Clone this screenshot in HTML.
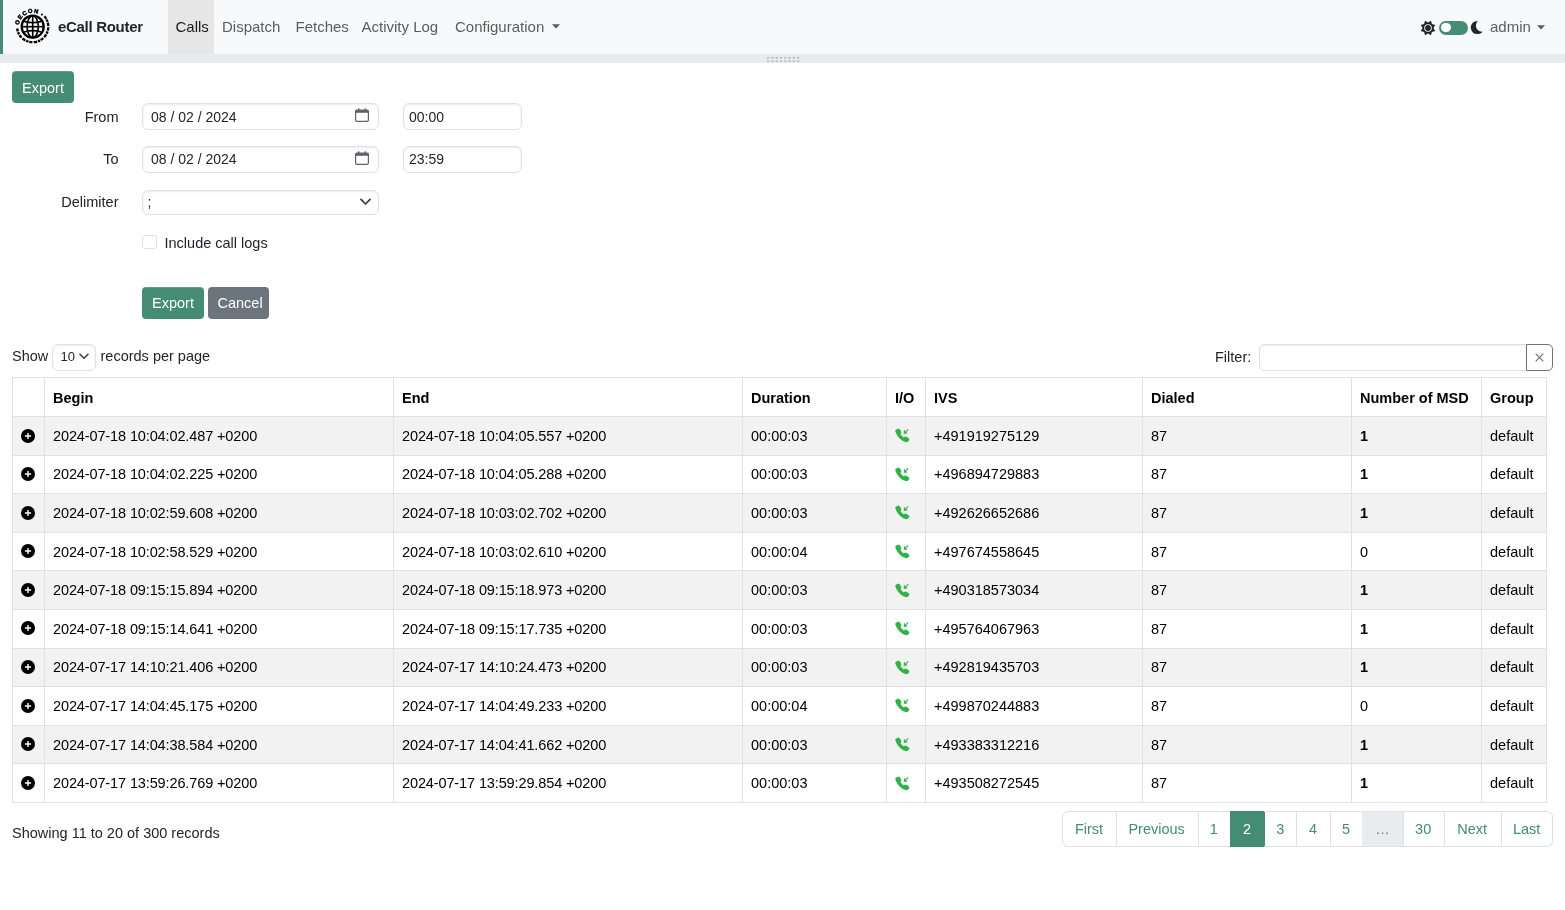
<!DOCTYPE html>
<html><head><meta charset="utf-8">
<style>
*{box-sizing:border-box}
html,body{margin:0;padding:0;width:1565px;height:910px;overflow:hidden;background:#fff;}body{will-change:transform;font-family:"Liberation Sans",sans-serif;color:#212529}
.a{position:absolute;white-space:nowrap}
.t{position:absolute;white-space:nowrap;font-size:14.5px;line-height:14.5px}
.nav{position:absolute;left:0;top:0;width:1565px;height:54px;background:#f8f9fa}
.strip{position:absolute;left:0;top:54px;width:1565px;height:9px;background:#e9ecef}
.nl{position:absolute;white-space:nowrap;font-size:15px;line-height:15px;color:#5c5c5c;top:19px}
.btn{position:absolute;background:#448c73;border-radius:4px;color:#fff;box-shadow:inset 0 1px 0 rgba(255,255,255,.15)}
.inp{position:absolute;border:1px solid #dee2e6;border-radius:6px;background:#fff;box-shadow:inset 0 1px 2px rgba(0,0,0,.075)}
table.dt{position:absolute;left:12px;top:377px;border-collapse:collapse;table-layout:fixed;width:1535px}
table.dt td,table.dt th{border:1px solid #dee2e6;padding:0 8px;font-size:14.5px;text-align:left;white-space:nowrap;overflow:hidden}
table.dt th{font-weight:bold;height:39px;color:#000;padding-top:2px}
table.dt td{height:38.6px;color:#000}
table.dt tr.odd td{background:#f2f2f2}
table.dt td.d{letter-spacing:-0.12px}
.pg{position:absolute;top:811px;height:36px;border:1px solid #dee2e6;border-left:none;color:#448c73;font-size:14.5px;line-height:34px;text-align:center}
</style></head><body>
<div class="nav"></div>
<div class="a" style="left:0;top:0;width:3px;height:54px;background:#448c73"></div>
<div class="strip"></div>

<svg class="a" style="left:12px;top:6px" width="40" height="40" viewBox="0 0 40 40">
 <defs><path id="arc" d="M 6.96 18.98 A 13.8 13.8 0 0 1 25.6 7.77"/></defs>
 <circle cx="20.7" cy="20.7" r="11" fill="#fff" stroke="#000" stroke-width="2.3"/>
 <g fill="none" stroke="#000" stroke-width="1.65">
  <line x1="20.7" y1="9.7" x2="20.7" y2="31.7"/>
  <ellipse cx="20.7" cy="20.7" rx="5.6" ry="11"/>
  <line x1="9.7" y1="20.7" x2="31.7" y2="20.7"/>
  <path d="M 12.2 15.4 Q 20.7 18 29.2 15.4"/>
  <path d="M 12.2 26 Q 20.7 23.4 29.2 26"/>
 </g>
 <text font-family="Liberation Sans" font-weight="bold" font-size="5.8" fill="#000" stroke="#000" stroke-width="0.45"><textPath href="#arc" textLength="25" lengthAdjust="spacing">OECON</textPath></text>
 <circle cx="29.9" cy="8.6" r="1" fill="#000"/><path d="M 32.4 10.3 A 15.6 15.6 0 1 1 5.2 22.5" fill="none" stroke="#000" stroke-width="2.3" stroke-dasharray="3.2 0.8 2.4 0.8 3.5 1.2"/>
</svg>
<div class="a" style="left:58px;top:19px;font-size:15px;line-height:15px;font-weight:bold;color:#212529;letter-spacing:-0.3px">eCall Router</div>
<div class="a" style="left:168px;top:0;width:46px;height:54px;background:#e6e6e6"></div>
<div class="nl" style="left:175.5px;color:#1a1a1a">Calls</div>
<div class="nl" style="left:222px">Dispatch</div>
<div class="nl" style="left:295.5px">Fetches</div>
<div class="nl" style="left:361.5px">Activity Log</div>
<div class="nl" style="left:455px">Configuration</div>
<svg class="a" style="left:552px;top:24px" width="8" height="5" viewBox="0 0 8 5"><path d="M0 0.3 L8 0.3 L4 4.6 Z" fill="#5c5c5c"/></svg>
<svg class="a" style="left:1420.2px;top:19.6px" width="16" height="16" viewBox="0 0 16 16">
 <polygon fill="#212529" points="10.98,0.79 11.89,4.11 15.21,5.02 13.50,8.00 15.21,10.98 11.89,11.89 10.98,15.21 8.00,13.50 5.02,15.21 4.11,11.89 0.79,10.98 2.50,8.00 0.79,5.02 4.11,4.11 5.02,0.79 8.00,2.50"/>
 <circle cx="8" cy="8" r="3.8" fill="#fff"/>
 <circle cx="8" cy="8" r="2.9" fill="#212529"/>
</svg>
<div class="a" style="left:1439px;top:20.8px;width:29px;height:14px;border-radius:7px;background:#448c73"></div>
<div class="a" style="left:1441.3px;top:23.2px;width:9.3px;height:9.3px;border-radius:50%;background:#fff"></div>
<svg class="a" style="left:1468px;top:18px" width="18" height="18" viewBox="0 0 18 18">
 <defs><mask id="mm"><rect width="18" height="18" fill="#fff"/><circle cx="14.0" cy="7.6" r="6.1" fill="#000"/></mask></defs>
 <circle cx="9.4" cy="9.5" r="6.6" fill="#212529" mask="url(#mm)"/>
</svg>
<div class="nl" style="left:1490px;top:18.5px">admin</div>
<svg class="a" style="left:1537px;top:24.5px" width="8" height="5" viewBox="0 0 8 5"><path d="M0 0.3 L8 0.3 L4 4.6 Z" fill="#5c5c5c"/></svg>
<div class="a" style="left:766px;top:56px;width:34px;height:6px;background-image:radial-gradient(circle,#b0b3b6 0.9px,transparent 1.1px);background-size:4.3px 3.5px"></div>

<div class="btn" style="left:12px;top:71px;width:62px;height:32px"></div>
<div class="t" style="left:22px;top:80.7px;color:#fff">Export</div>
<div class="t" style="left:0;width:118.5px;text-align:right;top:109.5px;color:#212529">From</div>
<div class="t" style="left:0;width:118.5px;text-align:right;top:152.3px;color:#212529">To</div>
<div class="t" style="left:0;width:118.5px;text-align:right;top:194.6px;color:#212529">Delimiter</div>
<div class="inp" style="left:142px;top:103px;width:237px;height:27px"></div>
<div class="t" style="left:151px;top:109.5px;font-size:14px">08 / 02 / 2024</div>
<svg class="a" style="left:355px;top:108.3px" width="14" height="14" viewBox="0 0 14 14"><rect x="0.6" y="2.2" width="12.8" height="11.2" rx="1.3" fill="none" stroke="#5f6368" stroke-width="1.2"/><rect x="0.6" y="2.2" width="12.8" height="2.6" fill="#5f6368"/><rect x="3" y="0.3" width="1.4" height="2.5" fill="#5f6368"/><rect x="9.6" y="0.3" width="1.4" height="2.5" fill="#5f6368"/></svg>
<div class="inp" style="left:403px;top:103px;width:119px;height:27px"></div>
<div class="t" style="left:409px;top:109.5px;font-size:14px">00:00</div>
<div class="inp" style="left:142px;top:146px;width:237px;height:27px"></div>
<div class="t" style="left:151px;top:152.3px;font-size:14px">08 / 02 / 2024</div>
<svg class="a" style="left:355px;top:151.3px" width="14" height="14" viewBox="0 0 14 14"><rect x="0.6" y="2.2" width="12.8" height="11.2" rx="1.3" fill="none" stroke="#5f6368" stroke-width="1.2"/><rect x="0.6" y="2.2" width="12.8" height="2.6" fill="#5f6368"/><rect x="3" y="0.3" width="1.4" height="2.5" fill="#5f6368"/><rect x="9.6" y="0.3" width="1.4" height="2.5" fill="#5f6368"/></svg>
<div class="inp" style="left:403px;top:146px;width:119px;height:27px"></div>
<div class="t" style="left:409px;top:152.3px;font-size:14px">23:59</div>
<div class="inp" style="left:142px;top:189.5px;width:237px;height:25px"></div>
<div class="t" style="left:147.5px;top:194.6px;font-size:14px">;</div>
<svg class="a" style="left:359.5px;top:197.5px" width="11" height="8" viewBox="0 0 11 8"><path d="M1 1.3 L5.5 6 L10 1.3" fill="none" stroke="#343a40" stroke-width="1.7" stroke-linecap="round" stroke-linejoin="round"/></svg>
<div class="a" style="left:142px;top:235px;width:14.5px;height:14px;border:1px solid #dee2e6;border-radius:3px;background:#fff"></div>
<div class="t" style="left:164.5px;top:235.6px">Include call logs</div>
<div class="btn" style="left:142px;top:287px;width:62px;height:32px"></div>
<div class="t" style="left:152px;top:295.7px;color:#fff">Export</div>
<div class="a" style="left:208px;top:287px;width:61px;height:32px;background:#6c757d;border-radius:4px"></div>
<div class="t" style="left:217.5px;top:295.7px;color:#fff">Cancel</div>

<div class="t" style="left:12px;top:348.7px">Show</div>
<div class="inp" style="left:51.5px;top:343.5px;width:44px;height:27px"></div>
<div class="t" style="left:60.5px;top:349.8px;font-size:13px;line-height:13px">10</div>
<svg class="a" style="left:78.5px;top:353px" width="10" height="7" viewBox="0 0 10 7"><path d="M1 1.2 L5 5.2 L9 1.2" fill="none" stroke="#343a40" stroke-width="1.5" stroke-linecap="round" stroke-linejoin="round"/></svg>
<div class="t" style="left:100.5px;top:348.7px">records per page</div>
<div class="t" style="left:1215px;top:350px">Filter:</div>
<div class="inp" style="left:1259px;top:343.5px;width:270px;height:27px;border-radius:5px 0 0 5px"></div>
<div class="a" style="left:1526px;top:343.5px;width:27px;height:27px;border:1px solid #6c757d;border-radius:0 5px 5px 0;background:#fff"></div>
<svg class="a" style="left:1534.5px;top:352.5px" width="9" height="9" viewBox="0 0 9 9"><path d="M0.7 0.7 L8.3 8.3 M8.3 0.7 L0.7 8.3" stroke="#6c757d" stroke-width="1.2"/></svg>
<div class="t" style="left:12px;top:825.5px">Showing 11 to 20 of 300 records</div>
<table class="dt"><colgroup><col style="width:32px"><col style="width:349px"><col style="width:349px"><col style="width:144px"><col style="width:39px"><col style="width:217px"><col style="width:209px"><col style="width:130px"><col style="width:65px"></colgroup><tr><th></th><th>Begin</th><th>End</th><th>Duration</th><th>I/O</th><th>IVS</th><th>Dialed</th><th>Number of MSD</th><th>Group</th></tr><tr class="odd"><td style="padding:0"><svg width="14" height="14" viewBox="0 0 14 14" style="display:block;margin-left:7.8px;position:relative;top:-0.3px"><circle cx="7" cy="7" r="7" fill="#000"/><path d="M7 3.9 V10.1 M3.9 7 H10.1" stroke="#fff" stroke-width="1.4"/></svg></td><td class="d">2024-07-18 10:04:02.487 +0200</td><td class="d">2024-07-18 10:04:05.557 +0200</td><td>00:00:03</td><td style="padding:0"><svg width="16" height="16" viewBox="0 0 16 16" style="display:block;margin-left:6.8px;position:relative;top:0.5px"><path fill="#2fb344" d="M3.65 0.93 a1.2 1.2 0 0 1 1.8 .1 l1.5 2 c.28.37.38.85.27 1.3 l-.46 1.84 a.7.7 0 0 0 .18.66 l2.1 2.1 a.7.7 0 0 0 .66.18 l1.84-.46 a1.5 1.5 0 0 1 1.3.27 l2 1.5 c.7.55.76 1.6.13 2.2 l-.9.9 c-.64.64-1.6.92-2.5.6 a16.5 16.5 0 0 1 -6.2-3.9 a16.5 16.5 0 0 1 -3.9-6.2 c-.32-.9-.04-1.86.6-2.5 z"/><path d="M14.2 1.3 L10.4 5.1 M10.4 2.3 V5.1 H13.2" fill="none" stroke="#2fb344" stroke-width="1.1"/></svg></td><td>+491919275129</td><td>87</td><td><b>1</b></td><td>default</td></tr><tr><td style="padding:0"><svg width="14" height="14" viewBox="0 0 14 14" style="display:block;margin-left:7.8px;position:relative;top:-0.3px"><circle cx="7" cy="7" r="7" fill="#000"/><path d="M7 3.9 V10.1 M3.9 7 H10.1" stroke="#fff" stroke-width="1.4"/></svg></td><td class="d">2024-07-18 10:04:02.225 +0200</td><td class="d">2024-07-18 10:04:05.288 +0200</td><td>00:00:03</td><td style="padding:0"><svg width="16" height="16" viewBox="0 0 16 16" style="display:block;margin-left:6.8px;position:relative;top:0.5px"><path fill="#2fb344" d="M3.65 0.93 a1.2 1.2 0 0 1 1.8 .1 l1.5 2 c.28.37.38.85.27 1.3 l-.46 1.84 a.7.7 0 0 0 .18.66 l2.1 2.1 a.7.7 0 0 0 .66.18 l1.84-.46 a1.5 1.5 0 0 1 1.3.27 l2 1.5 c.7.55.76 1.6.13 2.2 l-.9.9 c-.64.64-1.6.92-2.5.6 a16.5 16.5 0 0 1 -6.2-3.9 a16.5 16.5 0 0 1 -3.9-6.2 c-.32-.9-.04-1.86.6-2.5 z"/><path d="M14.2 1.3 L10.4 5.1 M10.4 2.3 V5.1 H13.2" fill="none" stroke="#2fb344" stroke-width="1.1"/></svg></td><td>+496894729883</td><td>87</td><td><b>1</b></td><td>default</td></tr><tr class="odd"><td style="padding:0"><svg width="14" height="14" viewBox="0 0 14 14" style="display:block;margin-left:7.8px;position:relative;top:-0.3px"><circle cx="7" cy="7" r="7" fill="#000"/><path d="M7 3.9 V10.1 M3.9 7 H10.1" stroke="#fff" stroke-width="1.4"/></svg></td><td class="d">2024-07-18 10:02:59.608 +0200</td><td class="d">2024-07-18 10:03:02.702 +0200</td><td>00:00:03</td><td style="padding:0"><svg width="16" height="16" viewBox="0 0 16 16" style="display:block;margin-left:6.8px;position:relative;top:0.5px"><path fill="#2fb344" d="M3.65 0.93 a1.2 1.2 0 0 1 1.8 .1 l1.5 2 c.28.37.38.85.27 1.3 l-.46 1.84 a.7.7 0 0 0 .18.66 l2.1 2.1 a.7.7 0 0 0 .66.18 l1.84-.46 a1.5 1.5 0 0 1 1.3.27 l2 1.5 c.7.55.76 1.6.13 2.2 l-.9.9 c-.64.64-1.6.92-2.5.6 a16.5 16.5 0 0 1 -6.2-3.9 a16.5 16.5 0 0 1 -3.9-6.2 c-.32-.9-.04-1.86.6-2.5 z"/><path d="M14.2 1.3 L10.4 5.1 M10.4 2.3 V5.1 H13.2" fill="none" stroke="#2fb344" stroke-width="1.1"/></svg></td><td>+492626652686</td><td>87</td><td><b>1</b></td><td>default</td></tr><tr><td style="padding:0"><svg width="14" height="14" viewBox="0 0 14 14" style="display:block;margin-left:7.8px;position:relative;top:-0.3px"><circle cx="7" cy="7" r="7" fill="#000"/><path d="M7 3.9 V10.1 M3.9 7 H10.1" stroke="#fff" stroke-width="1.4"/></svg></td><td class="d">2024-07-18 10:02:58.529 +0200</td><td class="d">2024-07-18 10:03:02.610 +0200</td><td>00:00:04</td><td style="padding:0"><svg width="16" height="16" viewBox="0 0 16 16" style="display:block;margin-left:6.8px;position:relative;top:0.5px"><path fill="#2fb344" d="M3.65 0.93 a1.2 1.2 0 0 1 1.8 .1 l1.5 2 c.28.37.38.85.27 1.3 l-.46 1.84 a.7.7 0 0 0 .18.66 l2.1 2.1 a.7.7 0 0 0 .66.18 l1.84-.46 a1.5 1.5 0 0 1 1.3.27 l2 1.5 c.7.55.76 1.6.13 2.2 l-.9.9 c-.64.64-1.6.92-2.5.6 a16.5 16.5 0 0 1 -6.2-3.9 a16.5 16.5 0 0 1 -3.9-6.2 c-.32-.9-.04-1.86.6-2.5 z"/><path d="M14.2 1.3 L10.4 5.1 M10.4 2.3 V5.1 H13.2" fill="none" stroke="#2fb344" stroke-width="1.1"/></svg></td><td>+497674558645</td><td>87</td><td>0</td><td>default</td></tr><tr class="odd"><td style="padding:0"><svg width="14" height="14" viewBox="0 0 14 14" style="display:block;margin-left:7.8px;position:relative;top:-0.3px"><circle cx="7" cy="7" r="7" fill="#000"/><path d="M7 3.9 V10.1 M3.9 7 H10.1" stroke="#fff" stroke-width="1.4"/></svg></td><td class="d">2024-07-18 09:15:15.894 +0200</td><td class="d">2024-07-18 09:15:18.973 +0200</td><td>00:00:03</td><td style="padding:0"><svg width="16" height="16" viewBox="0 0 16 16" style="display:block;margin-left:6.8px;position:relative;top:0.5px"><path fill="#2fb344" d="M3.65 0.93 a1.2 1.2 0 0 1 1.8 .1 l1.5 2 c.28.37.38.85.27 1.3 l-.46 1.84 a.7.7 0 0 0 .18.66 l2.1 2.1 a.7.7 0 0 0 .66.18 l1.84-.46 a1.5 1.5 0 0 1 1.3.27 l2 1.5 c.7.55.76 1.6.13 2.2 l-.9.9 c-.64.64-1.6.92-2.5.6 a16.5 16.5 0 0 1 -6.2-3.9 a16.5 16.5 0 0 1 -3.9-6.2 c-.32-.9-.04-1.86.6-2.5 z"/><path d="M14.2 1.3 L10.4 5.1 M10.4 2.3 V5.1 H13.2" fill="none" stroke="#2fb344" stroke-width="1.1"/></svg></td><td>+490318573034</td><td>87</td><td><b>1</b></td><td>default</td></tr><tr><td style="padding:0"><svg width="14" height="14" viewBox="0 0 14 14" style="display:block;margin-left:7.8px;position:relative;top:-0.3px"><circle cx="7" cy="7" r="7" fill="#000"/><path d="M7 3.9 V10.1 M3.9 7 H10.1" stroke="#fff" stroke-width="1.4"/></svg></td><td class="d">2024-07-18 09:15:14.641 +0200</td><td class="d">2024-07-18 09:15:17.735 +0200</td><td>00:00:03</td><td style="padding:0"><svg width="16" height="16" viewBox="0 0 16 16" style="display:block;margin-left:6.8px;position:relative;top:0.5px"><path fill="#2fb344" d="M3.65 0.93 a1.2 1.2 0 0 1 1.8 .1 l1.5 2 c.28.37.38.85.27 1.3 l-.46 1.84 a.7.7 0 0 0 .18.66 l2.1 2.1 a.7.7 0 0 0 .66.18 l1.84-.46 a1.5 1.5 0 0 1 1.3.27 l2 1.5 c.7.55.76 1.6.13 2.2 l-.9.9 c-.64.64-1.6.92-2.5.6 a16.5 16.5 0 0 1 -6.2-3.9 a16.5 16.5 0 0 1 -3.9-6.2 c-.32-.9-.04-1.86.6-2.5 z"/><path d="M14.2 1.3 L10.4 5.1 M10.4 2.3 V5.1 H13.2" fill="none" stroke="#2fb344" stroke-width="1.1"/></svg></td><td>+495764067963</td><td>87</td><td><b>1</b></td><td>default</td></tr><tr class="odd"><td style="padding:0"><svg width="14" height="14" viewBox="0 0 14 14" style="display:block;margin-left:7.8px;position:relative;top:-0.3px"><circle cx="7" cy="7" r="7" fill="#000"/><path d="M7 3.9 V10.1 M3.9 7 H10.1" stroke="#fff" stroke-width="1.4"/></svg></td><td class="d">2024-07-17 14:10:21.406 +0200</td><td class="d">2024-07-17 14:10:24.473 +0200</td><td>00:00:03</td><td style="padding:0"><svg width="16" height="16" viewBox="0 0 16 16" style="display:block;margin-left:6.8px;position:relative;top:0.5px"><path fill="#2fb344" d="M3.65 0.93 a1.2 1.2 0 0 1 1.8 .1 l1.5 2 c.28.37.38.85.27 1.3 l-.46 1.84 a.7.7 0 0 0 .18.66 l2.1 2.1 a.7.7 0 0 0 .66.18 l1.84-.46 a1.5 1.5 0 0 1 1.3.27 l2 1.5 c.7.55.76 1.6.13 2.2 l-.9.9 c-.64.64-1.6.92-2.5.6 a16.5 16.5 0 0 1 -6.2-3.9 a16.5 16.5 0 0 1 -3.9-6.2 c-.32-.9-.04-1.86.6-2.5 z"/><path d="M14.2 1.3 L10.4 5.1 M10.4 2.3 V5.1 H13.2" fill="none" stroke="#2fb344" stroke-width="1.1"/></svg></td><td>+492819435703</td><td>87</td><td><b>1</b></td><td>default</td></tr><tr><td style="padding:0"><svg width="14" height="14" viewBox="0 0 14 14" style="display:block;margin-left:7.8px;position:relative;top:-0.3px"><circle cx="7" cy="7" r="7" fill="#000"/><path d="M7 3.9 V10.1 M3.9 7 H10.1" stroke="#fff" stroke-width="1.4"/></svg></td><td class="d">2024-07-17 14:04:45.175 +0200</td><td class="d">2024-07-17 14:04:49.233 +0200</td><td>00:00:04</td><td style="padding:0"><svg width="16" height="16" viewBox="0 0 16 16" style="display:block;margin-left:6.8px;position:relative;top:0.5px"><path fill="#2fb344" d="M3.65 0.93 a1.2 1.2 0 0 1 1.8 .1 l1.5 2 c.28.37.38.85.27 1.3 l-.46 1.84 a.7.7 0 0 0 .18.66 l2.1 2.1 a.7.7 0 0 0 .66.18 l1.84-.46 a1.5 1.5 0 0 1 1.3.27 l2 1.5 c.7.55.76 1.6.13 2.2 l-.9.9 c-.64.64-1.6.92-2.5.6 a16.5 16.5 0 0 1 -6.2-3.9 a16.5 16.5 0 0 1 -3.9-6.2 c-.32-.9-.04-1.86.6-2.5 z"/><path d="M14.2 1.3 L10.4 5.1 M10.4 2.3 V5.1 H13.2" fill="none" stroke="#2fb344" stroke-width="1.1"/></svg></td><td>+499870244883</td><td>87</td><td>0</td><td>default</td></tr><tr class="odd"><td style="padding:0"><svg width="14" height="14" viewBox="0 0 14 14" style="display:block;margin-left:7.8px;position:relative;top:-0.3px"><circle cx="7" cy="7" r="7" fill="#000"/><path d="M7 3.9 V10.1 M3.9 7 H10.1" stroke="#fff" stroke-width="1.4"/></svg></td><td class="d">2024-07-17 14:04:38.584 +0200</td><td class="d">2024-07-17 14:04:41.662 +0200</td><td>00:00:03</td><td style="padding:0"><svg width="16" height="16" viewBox="0 0 16 16" style="display:block;margin-left:6.8px;position:relative;top:0.5px"><path fill="#2fb344" d="M3.65 0.93 a1.2 1.2 0 0 1 1.8 .1 l1.5 2 c.28.37.38.85.27 1.3 l-.46 1.84 a.7.7 0 0 0 .18.66 l2.1 2.1 a.7.7 0 0 0 .66.18 l1.84-.46 a1.5 1.5 0 0 1 1.3.27 l2 1.5 c.7.55.76 1.6.13 2.2 l-.9.9 c-.64.64-1.6.92-2.5.6 a16.5 16.5 0 0 1 -6.2-3.9 a16.5 16.5 0 0 1 -3.9-6.2 c-.32-.9-.04-1.86.6-2.5 z"/><path d="M14.2 1.3 L10.4 5.1 M10.4 2.3 V5.1 H13.2" fill="none" stroke="#2fb344" stroke-width="1.1"/></svg></td><td>+493383312216</td><td>87</td><td><b>1</b></td><td>default</td></tr><tr><td style="padding:0"><svg width="14" height="14" viewBox="0 0 14 14" style="display:block;margin-left:7.8px;position:relative;top:-0.3px"><circle cx="7" cy="7" r="7" fill="#000"/><path d="M7 3.9 V10.1 M3.9 7 H10.1" stroke="#fff" stroke-width="1.4"/></svg></td><td class="d">2024-07-17 13:59:26.769 +0200</td><td class="d">2024-07-17 13:59:29.854 +0200</td><td>00:00:03</td><td style="padding:0"><svg width="16" height="16" viewBox="0 0 16 16" style="display:block;margin-left:6.8px;position:relative;top:0.5px"><path fill="#2fb344" d="M3.65 0.93 a1.2 1.2 0 0 1 1.8 .1 l1.5 2 c.28.37.38.85.27 1.3 l-.46 1.84 a.7.7 0 0 0 .18.66 l2.1 2.1 a.7.7 0 0 0 .66.18 l1.84-.46 a1.5 1.5 0 0 1 1.3.27 l2 1.5 c.7.55.76 1.6.13 2.2 l-.9.9 c-.64.64-1.6.92-2.5.6 a16.5 16.5 0 0 1 -6.2-3.9 a16.5 16.5 0 0 1 -3.9-6.2 c-.32-.9-.04-1.86.6-2.5 z"/><path d="M14.2 1.3 L10.4 5.1 M10.4 2.3 V5.1 H13.2" fill="none" stroke="#2fb344" stroke-width="1.1"/></svg></td><td>+493508272545</td><td>87</td><td><b>1</b></td><td>default</td></tr></table><div class="pg" style="left:1061.5px;width:55.1px;border-left:1px solid #dee2e6;border-radius:6px 0 0 6px;">First</div><div class="pg" style="left:1115.6px;width:83.0px;">Previous</div><div class="pg" style="left:1197.6px;width:33.6px;">1</div><div class="pg" style="left:1230.2px;width:34.7px;background:#448c73;border-color:#448c73;color:#fff;">2</div><div class="pg" style="left:1263.9px;width:33.6px;">3</div><div class="pg" style="left:1296.5px;width:34.1px;">4</div><div class="pg" style="left:1329.6px;width:33.7px;">5</div><div class="pg" style="left:1362.3px;width:41.4px;background:#e9ecef;color:#6c757d;">…</div><div class="pg" style="left:1402.7px;width:42.0px;">30</div><div class="pg" style="left:1443.7px;width:58.0px;">Next</div><div class="pg" style="left:1500.7px;width:52.8px;border-radius:0 6px 6px 0;">Last</div></body></html>
